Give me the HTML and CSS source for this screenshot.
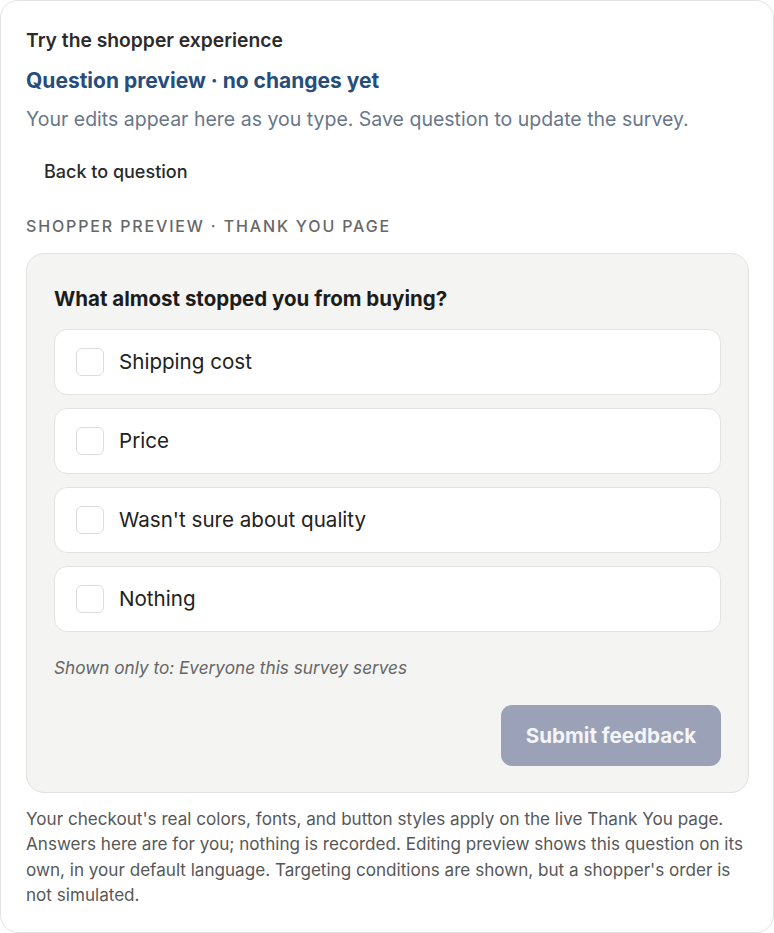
FILE: index.html
```html
<!DOCTYPE html>
<html lang="en">
<head>
<meta charset="utf-8">
<title>Try the shopper experience</title>
<link rel="stylesheet" href="styles.css">
</head>
<body>
<section class="card">
  <h2 class="title">Try the shopper experience</h2>
  <h3 class="subtitle">Question preview · no changes yet</h3>
  <p class="desc">Your edits appear here as you type. Save question to update the survey.</p>
  <button class="back" type="button">Back to question</button>
  <div class="label">Shopper preview · Thank You page</div>
  <div class="preview">
    <h4 class="question">What almost stopped you from buying?</h4>
    <div class="options">
      <label class="option"><span class="box"></span><span class="opt-text">Shipping cost</span></label>
      <label class="option"><span class="box"></span><span class="opt-text">Price</span></label>
      <label class="option"><span class="box"></span><span class="opt-text">Wasn't sure about quality</span></label>
      <label class="option"><span class="box"></span><span class="opt-text">Nothing</span></label>
    </div>
    <p class="shown">Shown only to: Everyone this survey serves</p>
    <div class="actions">
      <button class="submit" type="button">Submit feedback</button>
    </div>
  </div>
  <p class="footer">Your checkout's real colors, fonts, and button styles apply on the live Thank You page. Answers here are for you; nothing is recorded. Editing preview shows this question on its own, in your default language. Targeting conditions are shown, but a shopper's order is not simulated.</p>
</section>
</body>
</html>
```

FILE: styles.css
```css
* { box-sizing: border-box; }
html, body { margin: 0; padding: 0; background: #ffffff; }
body {
  font-family: Inter, "Noto Sans", "Liberation Sans", sans-serif;
  color: #222;
}
.card {
  width: 774px;
  height: 933px;
  border: 1px solid #e2e2e2;
  border-radius: 18px;
  background: #fff;
  padding: 27px 24px 0 25px;
}
.title {
  margin: 0;
  font-size: 19.3px;
  line-height: 24px;
  font-weight: 600;
  color: #2b2b2b;
}
.subtitle {
  margin: 16px 0 0;
  font-size: 21px;
  line-height: 26px;
  font-weight: 700;
  color: #264d7b;
}
.desc {
  margin: 13px 0 0;
  font-size: 19.5px;
  line-height: 24px;
  color: #687789;
}
.back {
  display: block;
  margin: 23px 0 0;
  padding: 6px 18px;
  border: 0;
  background: transparent;
  font-family: inherit;
  font-size: 18px;
  line-height: 24px;
  font-weight: 500;
  color: #2a2a2a;
}
.label {
  margin-top: 26px;
  font-size: 16px;
  line-height: 20px;
  font-weight: 500;
  letter-spacing: 1.85px;
  text-transform: uppercase;
  color: #686868;
}
.preview {
  margin-top: 17px;
  background: #f4f4f2;
  border: 1px solid #e1e1df;
  border-radius: 18px;
  padding: 31px 27px 26px 27px;
}
.question {
  margin: 0;
  font-size: 20.5px;
  line-height: 28px;
  font-weight: 700;
  color: #1c1c1c;
}
.options {
  margin-top: 16px;
  display: flex;
  flex-direction: column;
  gap: 13px;
}
.option {
  display: flex;
  align-items: center;
  gap: 15px;
  background: #fff;
  border: 1px solid #e3e3e1;
  border-radius: 13px;
  padding: 18px 21px;
}
.box {
  width: 28px;
  height: 28px;
  flex: none;
  border: 1px solid #dcdcdc;
  border-radius: 6px;
  background: #fff;
}
.opt-text {
  font-size: 20.6px;
  line-height: 28px;
  color: #222;
}
.shown {
  margin: 25px 0 0;
  font-size: 17.2px;
  line-height: 22px;
  font-style: italic;
  color: #666;
}
.actions {
  display: flex;
  justify-content: flex-end;
  margin-top: 26px;
}
.submit {
  width: 220px;
  height: 61px;
  border: 0;
  border-radius: 11px;
  background: #9ba2b7;
  color: #f4f5f8;
  font-family: inherit;
  font-size: 20.6px;
  font-weight: 700;
}
.footer {
  margin: 13px -6px 0 0;
  font-size: 17.1px;
  line-height: 25.3px;
  color: #575757;
}
```
